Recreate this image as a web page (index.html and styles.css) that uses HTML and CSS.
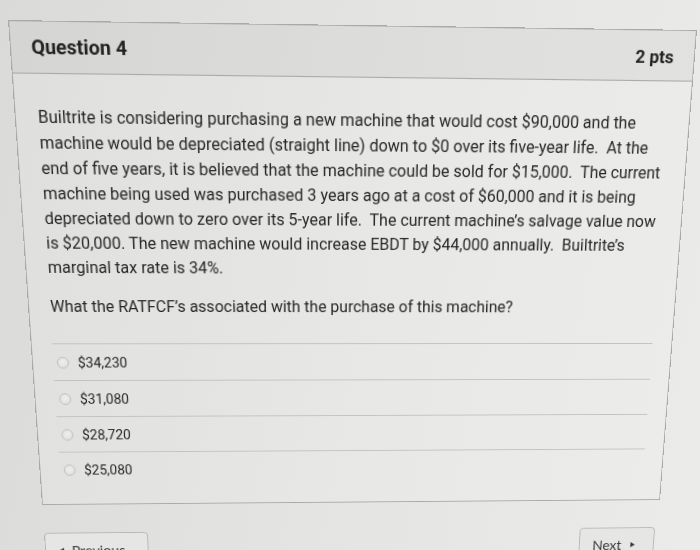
FILE: index.html
```html
<!DOCTYPE html>
<html lang="en">
<head>
<meta charset="utf-8">
<title>Question 4</title>
<link rel="stylesheet" href="styles.css">
</head>
<body>
<div class="screen">
  <div class="quiz-card">
    <div class="quiz-header">
      <h2 class="quiz-title">Question 4</h2>
      <span class="quiz-points">2 pts</span>
    </div>
    <div class="quiz-body">
      <p class="quiz-text">Builtrite is considering purchasing a new machine that would cost $90,000 and the<br>machine would be depreciated (straight line) down to $0 over its five-year life.&nbsp; At the<br>end of five years, it is believed that the machine could be sold for $15,000.&nbsp; The current<br>machine being used was purchased 3 years ago at a cost of $60,000 and it is being<br>depreciated down to zero over its 5-year life.&nbsp; The current machine’s salvage value now<br>is $20,000. The new machine would increase EBDT by $44,000 annually.&nbsp; Builtrite’s<br>marginal tax rate is 34%.</p>
      <p class="quiz-question">What the RATFCF’s associated with the purchase of this machine?</p>
      <div class="answers">
        <label class="answer"><span class="radio"></span><span class="answer-text">$34,230</span></label>
        <label class="answer"><span class="radio"></span><span class="answer-text">$31,080</span></label>
        <label class="answer"><span class="radio"></span><span class="answer-text">$28,720</span></label>
        <label class="answer"><span class="radio"></span><span class="answer-text">$25,080</span></label>
      </div>
    </div>
  </div>
  <div class="nav">
    <button class="btn btn-prev"><span class="tri tri-left"></span>Previous</button>
    <button class="btn btn-next">Next<span class="tri tri-right"></span></button>
  </div>
</div>
</body>
</html>
```

FILE: styles.css
```css
html, body {
  margin: 0;
  padding: 0;
  width: 700px;
  height: 550px;
  overflow: hidden;
}

body {
  background: linear-gradient(100deg, #dadad8 0%, #e3e3e1 45%, #ebebe9 100%);
  font-family: Roboto, "Liberation Sans", sans-serif;
  color: #272727;
}

.screen {
  width: 660px;
  transform-origin: 0 0;
  transform: matrix3d(1.078957, 0.01665871, 0, 0.00005024,
                      0.0810596, 1.1333758, 0, 0.000243483,
                      0, 0, 1, 0,
                      8, 20, 0, 1);
}

.quiz-card {
  box-sizing: border-box;
  width: 660px;
  border: 1px solid #a9a9a7;
  background: rgba(255, 255, 255, 0.12);
}

.quiz-header {
  height: 46px;
  display: flex;
  align-items: center;
  justify-content: space-between;
  padding: 0 20px 0 19px;
  background: rgba(0, 0, 0, 0.045);
  border-bottom: 1px solid #a9a9a7;
}

.quiz-title {
  margin: 0;
  font-size: 18.5px;
  font-weight: 700;
  color: #222;
}

.quiz-points {
  font-size: 17px;
  font-weight: 700;
  color: #222;
  padding-top: 1px;
}

.quiz-body {
  padding: 28px 20px 19px 20px;
}

.quiz-text {
  margin: 0;
  font-size: 16px;
  line-height: 24px;
  white-space: nowrap;
  padding-left: 1px;
}

.quiz-question {
  margin: 15px 0 0 0;
  font-size: 16px;
  line-height: 24px;
  padding-left: 1px;
}

.answers {
  margin-top: 25px;
  display: flex;
  flex-direction: column;
}

.answer {
  height: 37px;
  border-top: 1px solid #c2c2c0;
  display: flex;
  align-items: center;
  padding-left: 4px;
}

.radio {
  box-sizing: border-box;
  width: 12px;
  height: 12px;
  border-radius: 50%;
  border: 1px solid #bdbdbb;
  background: radial-gradient(circle at 50% 40%, #eeeeec 0%, #dededc 100%);
  margin-right: 9px;
  flex: none;
}

.answer-text {
  font-size: 14px;
  line-height: 16px;
  color: #262626;
}

.nav {
  display: flex;
  justify-content: space-between;
  margin-top: 31px;
  padding-right: 3px;
}

.btn {
  box-sizing: border-box;
  height: 36px;
  border: 1px solid #b7b7b5;
  border-radius: 4px;
  background: #e6e6e4;
  font-family: Lato, "Open Sans", sans-serif;
  font-size: 15px;
  color: #3a3a3a;
  display: flex;
  align-items: center;
  padding-top: 4px;
}

.btn-prev {
  width: 109px;
  padding-left: 14px;
}

.btn-next {
  width: 83px;
  padding-left: 14px;
}

.tri {
  display: inline-block;
  width: 0;
  height: 0;
  border-top: 3.5px solid transparent;
  border-bottom: 3.5px solid transparent;
}

.tri-right {
  border-left: 5px solid #3a3a3a;
  margin-left: 10px;
}

.tri-left {
  border-right: 5px solid #3a3a3a;
  margin-right: 8px;
}
```
